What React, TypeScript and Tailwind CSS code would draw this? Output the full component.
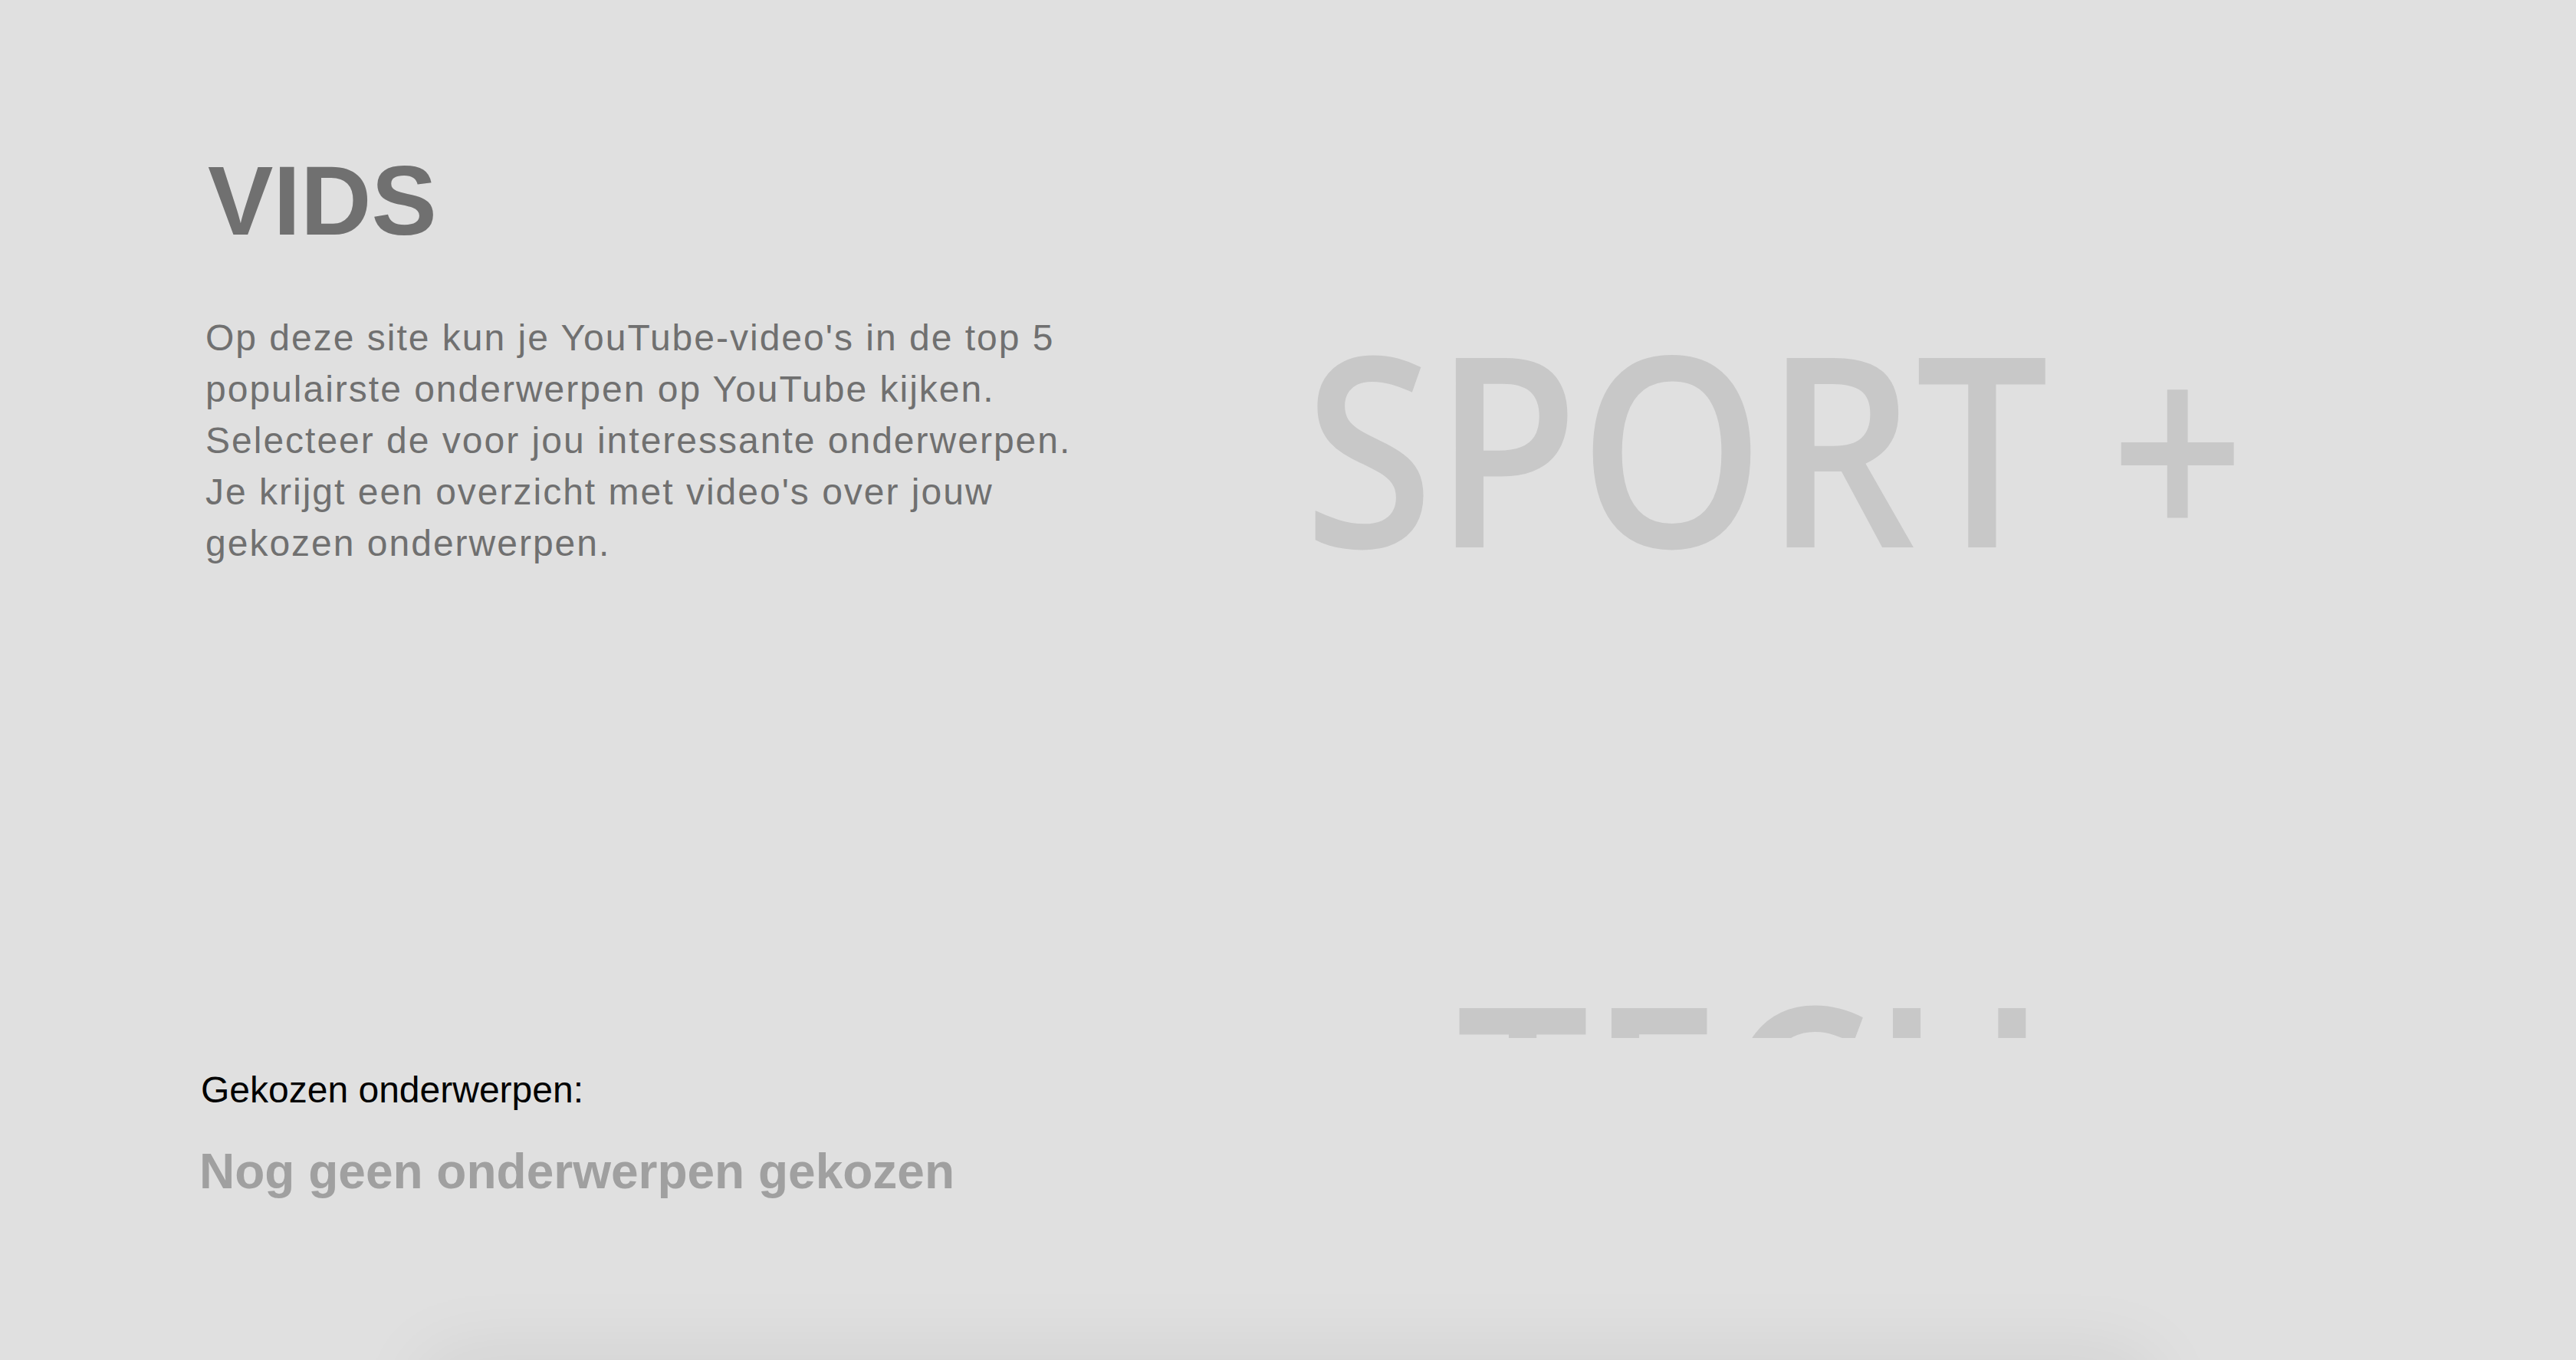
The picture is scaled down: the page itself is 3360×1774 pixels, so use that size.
const topics = ['SPORT +', 'TECH +']

export default function App() {
  return (
    <div className="h-[1774px] overflow-hidden bg-[#e0e0e0]">
      <main className="grid h-[1774px] grid-cols-2">
        {/* intro + chosen topics */}
        <section className="flex flex-col pl-[260px] font-['Liberation_Sans',Arial,sans-serif]">
          <h1 className="ml-[11px] mt-[198px] text-[128px] font-bold leading-none text-[#707070]">VIDS</h1>
          <p className="ml-[8px] mt-[81px] w-[1180px] text-[48px] leading-[67px] tracking-[2px] text-[#707070]">
            Op deze site kun je YouTube-video's in de top 5 populairste onderwerpen op YouTube kijken.
            Selecteer de voor jou interessante onderwerpen. Je krijgt een overzicht met video's over jouw
            gekozen onderwerpen.
          </p>
          <div className="mt-[656px] flex flex-col">
            <h2 className="ml-[2px] text-[48px] leading-none text-black">Gekozen onderwerpen:</h2>
            <p className="mt-[50px] text-[64px] font-bold leading-none text-[#a0a0a0]">Nog geen onderwerpen gekozen</p>
          </div>
        </section>

        {/* topic list */}
        <section className="flex h-[1354px] flex-col items-end overflow-hidden pr-[432px] pt-[407px] font-['Open_Sans',sans-serif]">
          <ul className="flex flex-col items-end gap-[502px]">
            {topics.map((t) => (
              <li key={t} className="origin-right scale-x-[0.89] whitespace-nowrap text-[346px] font-semibold leading-none text-[#c8c8c8]">
                {t}
              </li>
            ))}
          </ul>
        </section>
      </main>
      <div className="mx-auto h-[400px] w-[2240px] bg-[#e0e0e0] shadow-[0_0_100px_rgba(0,0,0,0.08)]" />
    </div>
  )
}
